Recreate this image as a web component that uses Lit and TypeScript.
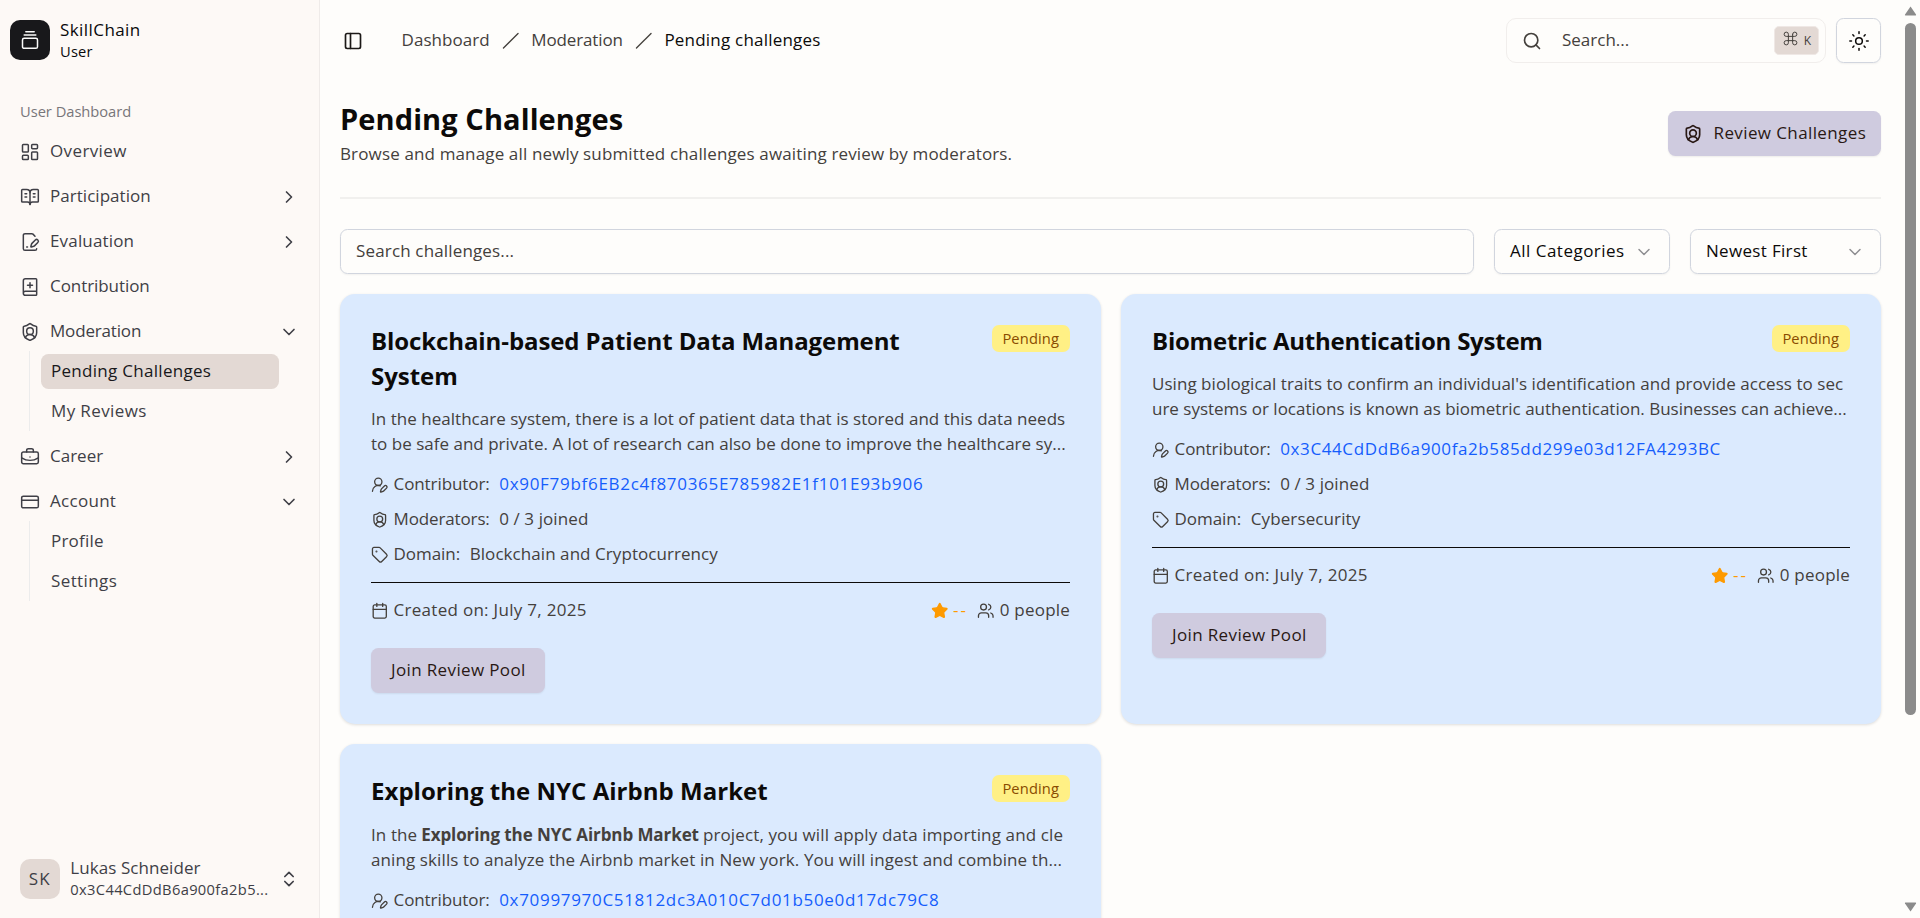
import { LitElement, html, css, svg, nothing } from "lit";
import { customElement, property } from "lit/decorators.js";

const ICONS: Record<string, unknown> = {
  logo: svg`<path d="M7 2h10"/><path d="M5 6h14"/><rect width="18" height="12" x="3" y="10" rx="2"/>`,
  dashboard: svg`<rect width="7" height="9" x="3" y="3" rx="1"/><rect width="7" height="5" x="14" y="3" rx="1"/><rect width="7" height="9" x="14" y="12" rx="1"/><rect width="7" height="5" x="3" y="16" rx="1"/>`,
  book: svg`<path d="M12 7v14"/><path d="M16 12h2"/><path d="M16 8h2"/><path d="M3 18a1 1 0 0 1-1-1V4a1 1 0 0 1 1-1h5a4 4 0 0 1 4 4 4 4 0 0 1 4-4h5a1 1 0 0 1 1 1v13a1 1 0 0 1-1 1h-6a3 3 0 0 0-3 3 3 3 0 0 0-3-3z"/><path d="M6 12h2"/><path d="M6 8h2"/>`,
  filePen: svg`<path d="m18 5-2.414-2.414A2 2 0 0 0 14.172 2H6a2 2 0 0 0-2 2v16a2 2 0 0 0 2 2h12a2 2 0 0 0 2-2"/><path d="M21.378 12.626a1 1 0 0 0-3.004-3.004l-4.01 4.012a2 2 0 0 0-.506.854l-.837 2.87a.5.5 0 0 0 .62.62l2.87-.837a2 2 0 0 0 .854-.506z"/><path d="M8 18h1"/>`,
  bookPlus: svg`<path d="M12 7v6"/><path d="M4 19.5v-15A2.5 2.5 0 0 1 6.5 2H19a1 1 0 0 1 1 1v18a1 1 0 0 1-1 1H6.5a1 1 0 0 1 0-5H20"/><path d="M9 10h6"/>`,
  shield: svg`<path d="M20 13c0 5-3.5 7.5-7.66 8.95a1 1 0 0 1-.67-.01C7.5 20.5 4 18 4 13V6a1 1 0 0 1 1-1c2 0 4.5-1.2 6.24-2.72a1.17 1.17 0 0 1 1.52 0C14.51 3.81 17 5 19 5a1 1 0 0 1 1 1z"/><path d="M6.376 18.91a6 6 0 0 1 11.249.003"/><circle cx="12" cy="11" r="4"/>`,
  briefcase: svg`<path d="M12 12h.01"/><path d="M16 6V4a2 2 0 0 0-2-2h-4a2 2 0 0 0-2 2v2"/><path d="M22 13a18.15 18.15 0 0 1-20 0"/><rect width="20" height="14" x="2" y="6" rx="2"/>`,
  card: svg`<rect width="20" height="14" x="2" y="5" rx="2"/><path d="M2 10h20"/>`,
  right: svg`<path d="m9 18 6-6-6-6"/>`,
  down: svg`<path d="m6 9 6 6 6-6"/>`,
  upDown: svg`<path d="m7 15 5 5 5-5"/><path d="m7 9 5-5 5 5"/>`,
  panel: svg`<rect width="18" height="18" x="3" y="3" rx="2"/><path d="M9 3v18"/>`,
  slash: svg`<path d="M22 2 2 22"/>`,
  search: svg`<circle cx="11" cy="11" r="8"/><path d="m21 21-4.3-4.3"/>`,
  command: svg`<path d="M15 6v12a3 3 0 1 0 3-3H6a3 3 0 1 0 3 3V6a3 3 0 1 0-3 3h12a3 3 0 1 0-3-3"/>`,
  sun: svg`<circle cx="12" cy="12" r="4"/><path d="M12 1v2"/><path d="M12 21v2"/><path d="m4.6 4.6 1.3 1.3"/><path d="m18.1 18.1 1.3 1.3"/><path d="M1 12h2"/><path d="M21 12h2"/><path d="m5.9 18.1-1.3 1.3"/><path d="m19.4 4.6-1.3 1.3"/>`,
  userPen: svg`<path d="M2 21a8 8 0 0 1 10.821-7.487"/><path d="M21.378 16.626a1 1 0 0 0-3.004-3.004l-4.01 4.012a2 2 0 0 0-.506.854l-.837 2.87a.5.5 0 0 0 .62.62l2.87-.837a2 2 0 0 0 .854-.506z"/><circle cx="10" cy="8" r="5"/>`,
  tag: svg`<path d="M12.586 2.586A2 2 0 0 0 11.172 2H4a2 2 0 0 0-2 2v7.172a2 2 0 0 0 .586 1.414l8.704 8.704a2.426 2.426 0 0 0 3.42 0l6.58-6.58a2.426 2.426 0 0 0 0-3.42z"/><circle cx="7.5" cy="7.5" r=".5" fill="currentColor"/>`,
  calendar: svg`<path d="M8 2v4"/><path d="M16 2v4"/><rect width="18" height="18" x="3" y="4" rx="2"/><path d="M3 10h18"/>`,
  users: svg`<path d="M16 21v-2a4 4 0 0 0-4-4H6a4 4 0 0 0-4 4v2"/><path d="M16 3.128a4 4 0 0 1 0 7.744"/><path d="M22 21v-2a4 4 0 0 0-3-3.87"/><circle cx="9" cy="7" r="4"/>`,
  star: svg`<path fill="currentColor" d="M11.525 2.295a.53.53 0 0 1 .95 0l2.31 4.679a2.123 2.123 0 0 0 1.595 1.16l5.166.756a.53.53 0 0 1 .294.904l-3.736 3.638a2.123 2.123 0 0 0-.611 1.878l.882 5.14a.53.53 0 0 1-.771.56l-4.618-2.428a2.122 2.122 0 0 0-1.973 0L6.396 21.01a.53.53 0 0 1-.77-.56l.881-5.139a2.122 2.122 0 0 0-.611-1.879L2.16 9.795a.53.53 0 0 1 .294-.906l5.165-.755a2.122 2.122 0 0 0 1.597-1.16z"/>`,
};

/** Outline icon on a 24-unit grid. */
@customElement("ui-icon")
class UiIcon extends LitElement {
  static styles = css`
    :host { display: block; flex: none; width: 20px; height: 20px; }
    svg { display: block; width: 100%; height: 100%; overflow: visible; }
  `;
  @property() name = "";
  @property({ type: Number }) stroke = 1.8;
  render() {
    return html`<svg viewBox="0 0 24 24" fill="none" stroke="currentColor" stroke-width=${this.stroke}
      stroke-linecap="round" stroke-linejoin="round" aria-hidden="true">${ICONS[this.name] ?? nothing}</svg>`;
  }
}

/** A run of text tracked so that it takes up exactly `w` pixels, whichever sans face is present. */
@customElement("fit-text")
class FitText extends LitElement {
  static styles = css`
    :host { display: block; flex: none; white-space: pre; margin: -1px 0 1px; }
  `;
  @property() text = "";
  @property({ type: Number }) w = 0;
  render() {
    return html`<span>${this.text}</span>`;
  }
  async updated() {
    await document.fonts.ready;
    const span = this.renderRoot.querySelector("span")!;
    span.style.letterSpacing = "0px";
    const natural = span.getBoundingClientRect().width;
    const n = this.text.length;
    span.style.letterSpacing = `${((this.w + 1.2 - natural) / n).toFixed(3)}px`;
  }
}

const t = (text: string, w: number, cls = "") => html`<fit-text class=${cls} .text=${text} .w=${w}></fit-text>`;

interface NavItem {
  icon: string;
  label: string;
  w: number;
  chevron?: "right" | "down";
  children?: { label: string; w: number; active?: boolean }[];
}

const NAV: NavItem[] = [
  { icon: "dashboard", label: "Overview", w: 75.5 },
  { icon: "book", label: "Participation", w: 99.5, chevron: "right" },
  { icon: "filePen", label: "Evaluation", w: 83, chevron: "right" },
  { icon: "bookPlus", label: "Contribution", w: 98.5 },
  {
    icon: "shield", label: "Moderation", w: 90, chevron: "down",
    children: [
      { label: "Pending Challenges", w: 159, active: true },
      { label: "My Reviews", w: 94.5 },
    ],
  },
  { icon: "briefcase", label: "Career", w: 52, chevron: "right" },
  {
    icon: "card", label: "Account", w: 65, chevron: "down",
    children: [
      { label: "Profile", w: 51.5 },
      { label: "Settings", w: 65 },
    ],
  },
];

type Run = [text: string, w: number, bold?: boolean];
interface Challenge {
  title: Run[];
  lines: Run[][];
  contributor: Run;
  domain?: Run;
}

const CHALLENGES: Challenge[] = [
  {
    title: [["Blockchain-based Patient Data Management", 527.5], ["System", 85.5]],
    lines: [
      [["In the healthcare system, there is a lot of patient data that is stored and this data needs", 693]],
      [["to be safe and private. A lot of research can also be done to improve the healthcare sy...", 693.5]],
    ],
    contributor: ["0x90F79bf6EB2c4f870365E785982E1f101E93b906", 423],
    domain: ["Blockchain and Cryptocurrency", 247],
  },
  {
    title: [["Biometric Authentication System", 389.5]],
    lines: [
      [["Using biological traits to confirm an individual's identification and provide access to sec", 690]],
      [["ure systems or locations is known as biometric authentication. Businesses can achieve...", 693.5]],
    ],
    contributor: ["0x3C44CdDdB6a900fa2b585dd299e03d12FA4293BC", 439.5],
    domain: ["Cybersecurity", 108.5],
  },
  {
    title: [["Exploring the NYC Airbnb Market", 395.5]],
    lines: [
      [["In the", 45], ["Exploring the NYC Airbnb Market", 276.5, true], ["project, you will apply data importing and cle", 359]],
      [["aning skills to analyze the Airbnb market in New york. You will ingest and combine th...", 690]],
    ],
    contributor: ["0x70997970C51812dc3A010C7d01b50e0d17dc79C8", 439],
  },
];

@customElement("app-root")
class AppRoot extends LitElement {
  static styles = css`
    :host {
      display: flex;
      width: 1920px;
      height: 918px;
      overflow: hidden;
      background: #fefdfb;
      color: #44403c;
      font-family: "Open Sans", "Noto Sans", sans-serif;
      font-size: 17px;
      line-height: 25px;
      font-weight: 400;
    }
    * { box-sizing: border-box; }

    .sidebar {
      flex: none;
      width: 320px;
      display: flex;
      flex-direction: column;
      background: #fdf9f6;
      border-right: 1px solid #efebe9;
      color: #3f3f46;
    }
    .brand { display: flex; gap: 10px; height: 60px; padding: 20px 10px 0; color: #09090b; }
    .logo {
      width: 40px; height: 40px; border-radius: 10px;
      display: grid; place-items: center;
      background: #18181b; color: #fafafa;
    }
    .brand-name { line-height: 22px; }
    .small { font-size: 14.7px; line-height: 20px; }
    .section { height: 71px; padding: 42px 20px 0; color: #78767a; }
    .nav { display: flex; flex-direction: column; gap: 5px; flex: 1; padding: 0 10px; }
    .row { display: flex; align-items: center; gap: 10px; height: 40px; padding: 0 10px; }
    .row ui-icon { position: relative; top: 1px; }
    .grow { flex: 1; }
    .sub {
      margin: 0 30px 0 19px; padding: 2.5px 0; height: 80px;
      border-left: 1.4px solid #ececec;
      display: flex; flex-direction: column; gap: 5px;
    }
    .sub-item { height: 35px; margin-left: 11px; padding: 0 10px; display: flex; align-items: center; border-radius: 7.5px; }
    .active { background: #e3d9d4; color: #18181b; }
    .user { display: flex; align-items: center; gap: 10.5px; padding: 0 20px 19px; height: 60px; }
    .avatar { width: 40px; height: 40px; border-radius: 10px; background: #e3d9d4; display: grid; place-items: center; padding-top: 1px; }
    .user-text { flex: 1; padding-top: 1px; }
    .user-name { line-height: 22px; }

    .main { flex: 1; padding: 0 20px; display: flex; flex-direction: column; min-width: 0; }
    .topbar { display: flex; align-items: center; height: 81px; flex: none; padding-left: 3px; }
    .panel { color: #1c1917; margin-right: 38.5px; }
    .crumbs { display: flex; align-items: center; gap: 12px; flex: 1; }
    .slash { width: 17.5px; height: 17.5px; }
    .current { color: #0c0a09; }
    .search {
      width: 320px; height: 45px; border: 1px solid #f1eeec; border-radius: 10px;
      display: flex; align-items: center; padding: 0 6px 0 15px; margin-right: 10px;
    }
    .search fit-text { margin-left: 20px; flex: 1; }
    .kbd {
      width: 45px; height: 29px; border-radius: 5px; background: #e3d9d4; border: 1px solid #efe8e5;
      display: flex; align-items: center; justify-content: center; gap: 5px; font-size: 12px;
    }
    .cmd { width: 17px; height: 17px; margin-top: -5px; }
    .outline { border: 1px solid #d1d5de; border-radius: 7.5px; box-shadow: 0 1px 2px rgba(0, 0, 0, 0.05); }
    .theme { width: 45px; height: 45px; display: grid; place-items: center; color: #0c0a09; }

    .heading { display: flex; justify-content: space-between; height: 118px; border-bottom: 2px solid #f1f0ee; flex: none; }
    .h1 { font-size: 29px; line-height: 38px; font-weight: 700; color: #0c0a09; padding-top: 20px; }
    .lead { line-height: 32px; }
    .btn {
      height: 45px; display: flex; align-items: center; padding: 0 20px;
      background: #cfcbdf; color: #291814; border-radius: 7.5px; box-shadow: 0 1px 2px rgba(0, 0, 0, 0.07);
    }
    .review { margin-top: 30px; padding: 0 15px; width: 213px; gap: 10.5px; }
    .filters { display: grid; grid-template-columns: 1134px 176px 191px; gap: 20px; padding: 30px 0 20px; flex: none; }
    .field { height: 45px; display: flex; align-items: center; justify-content: space-between; padding: 0 15px; }
    .select { color: #0c0a09; }
    .select ui-icon { color: #8f8f92; }

    .grid { display: grid; grid-template-columns: 761px 760px; gap: 20px; align-items: stretch; }
    .card { background: #dbeafe; border-radius: 15px; padding: 31px; box-shadow: 0 1px 3px rgba(0, 0, 0, 0.13); }
    .card:nth-child(3) .desc { padding-top: 13px; }
    .card-head { display: flex; justify-content: space-between; align-items: flex-start; }
    .title { font-size: 24px; line-height: 35px; font-weight: 700; color: #0c0a09; margin: -1px 0 1px; }
    .badge { height: 27px; width: 78.5px; display: grid; place-items: center; border-radius: 7px; background: #fff085; color: #894b00; }
    .desc { padding: 12px 0 15px; }
    .line { display: flex; gap: 4px; }
    .bold { font-weight: 700; }
    .meta { display: flex; flex-direction: column; gap: 10px; padding-bottom: 15px; border-bottom: 1px solid #0c0a09; }
    .item { display: flex; align-items: center; gap: 5px; }
    .item ui-icon { width: 17.5px; height: 17.5px; }
    .value { margin-left: 4.5px; }
    .link { color: #155dfc; }
    .foot { display: flex; align-items: center; padding: 15px 0 25px; }
    .stats { flex: 1; display: flex; justify-content: flex-end; gap: 9.5px; }
    .rating { color: #fe9a00; }
    .join { width: 174px; }

    .scroll { flex: none; width: 19px; display: flex; flex-direction: column; align-items: center; padding: 6px 0; }
    .scroll svg { display: block; fill: #8b8b8b; }
    .thumb { width: 11px; height: 692px; border-radius: 6px; background: #8b8b8b; margin: 7px 0 auto; }
  `;

  private navItem(n: NavItem) {
    return html`<div>
      <div class="row">
        <ui-icon name=${n.icon}></ui-icon>${t(n.label, n.w, "grow")}
        ${n.chevron ? html`<ui-icon name=${n.chevron} stroke="2"></ui-icon>` : nothing}
      </div>
      ${n.children
        ? html`<div class="sub">${n.children.map((c) => html`<div class="sub-item ${c.active ? "active" : ""}">${t(c.label, c.w)}</div>`)}</div>`
        : nothing}
    </div>`;
  }

  private card(c: Challenge) {
    return html`<article class="card">
      <div class="card-head">
        <div class="title">${c.title.map(([s, w]) => t(s, w))}</div>
        <div class="badge small">${t("Pending", 55.5)}</div>
      </div>
      <div class="desc">
        ${c.lines.map((l) => html`<div class="line">${l.map(([s, w, b]) => t(s, w, b ? "bold" : ""))}</div>`)}
      </div>
      <div class="meta">
        <div class="item"><ui-icon name="userPen"></ui-icon>${t("Contributor:", 95)}${t(c.contributor[0], c.contributor[1], "value link")}</div>
        ${c.domain
          ? html`<div class="item"><ui-icon name="shield"></ui-icon>${t("Moderators:", 95)}${t("0 / 3 joined", 88, "value")}</div>
              <div class="item"><ui-icon name="tag"></ui-icon>${t("Domain:", 65.5)}${t(c.domain[0], c.domain[1], "value")}</div>`
          : nothing}
      </div>
      ${c.domain
        ? html`<div class="foot">
              <div class="item"><ui-icon name="calendar"></ui-icon>${t("Created on: July 7, 2025", 192)}</div>
              <div class="stats">
                <div class="item rating"><ui-icon name="star"></ui-icon>${t("--", 13.5)}</div>
                <div class="item"><ui-icon name="users"></ui-icon>${t("0 people", 69)}</div>
              </div>
            </div>
            <div class="btn join">${t("Join Review Pool", 133.5)}</div>`
        : nothing}
    </article>`;
  }

  render() {
    return html`
      <aside class="sidebar">
        <div class="brand">
          <div class="logo"><ui-icon name="logo"></ui-icon></div>
          <div><div class="brand-name">${t("SkillChain", 79.5)}</div><div class="small">${t("User", 31.5)}</div></div>
        </div>
        <div class="section small">${t("User Dashboard", 110)}</div>
        <nav class="nav">${NAV.map((n) => this.navItem(n))}</nav>
        <div class="user">
          <div class="avatar">${t("SK", 21)}</div>
          <div class="user-text"><div class="user-name">${t("Lukas Schneider", 129)}</div><div class="small">${t("0x3C44CdDdB6a900fa2b5...", 197)}</div></div>
          <ui-icon name="upDown" stroke="2"></ui-icon>
        </div>
      </aside>
      <main class="main">
        <header class="topbar">
          <ui-icon class="panel" name="panel" stroke="2"></ui-icon>
          <div class="crumbs">
            ${t("Dashboard", 87)}<ui-icon class="slash" name="slash"></ui-icon>
            ${t("Moderation", 90.5)}<ui-icon class="slash" name="slash"></ui-icon>
            ${t("Pending challenges", 155, "current")}
          </div>
          <div class="search">
            <ui-icon name="search" stroke="2"></ui-icon>${t("Search...", 66)}
            <div class="kbd"><ui-icon class="cmd" name="command" stroke="1.4"></ui-icon>K</div>
          </div>
          <div class="theme outline"><ui-icon name="sun" stroke="1.8"></ui-icon></div>
        </header>
        <section class="heading">
          <div><div class="h1">${t("Pending Challenges", 282)}</div><div class="lead">${t("Browse and manage all newly submitted challenges awaiting review by moderators.", 671)}</div></div>
          <div class="btn review"><ui-icon name="shield" stroke="2"></ui-icon>${t("Review Challenges", 151.5)}</div>
        </section>
        <div class="filters">
          <div class="field outline">${t("Search challenges...", 157)}</div>
          <div class="field outline select">${t("All Categories", 113.5)}<ui-icon name="down"></ui-icon></div>
          <div class="field outline select">${t("Newest First", 100.5)}<ui-icon name="down"></ui-icon></div>
        </div>
        <div class="grid">${CHALLENGES.map((c) => this.card(c))}</div>
      </main>
      <div class="scroll">
        <svg width="13" height="10" viewBox="0 0 13 10"><path d="M6.5 0.5 12 8.6Q12.4 9.5 11.5 9.5H1.5Q.6 9.5 1 8.6Z"/></svg>
        <div class="thumb"></div>
        <svg width="13" height="10" viewBox="0 0 13 10"><path d="M6.5 9.5 12 1.4Q12.4.5 11.5.5H1.5Q.6.5 1 1.4Z"/></svg>
      </div>
    `;
  }
}
